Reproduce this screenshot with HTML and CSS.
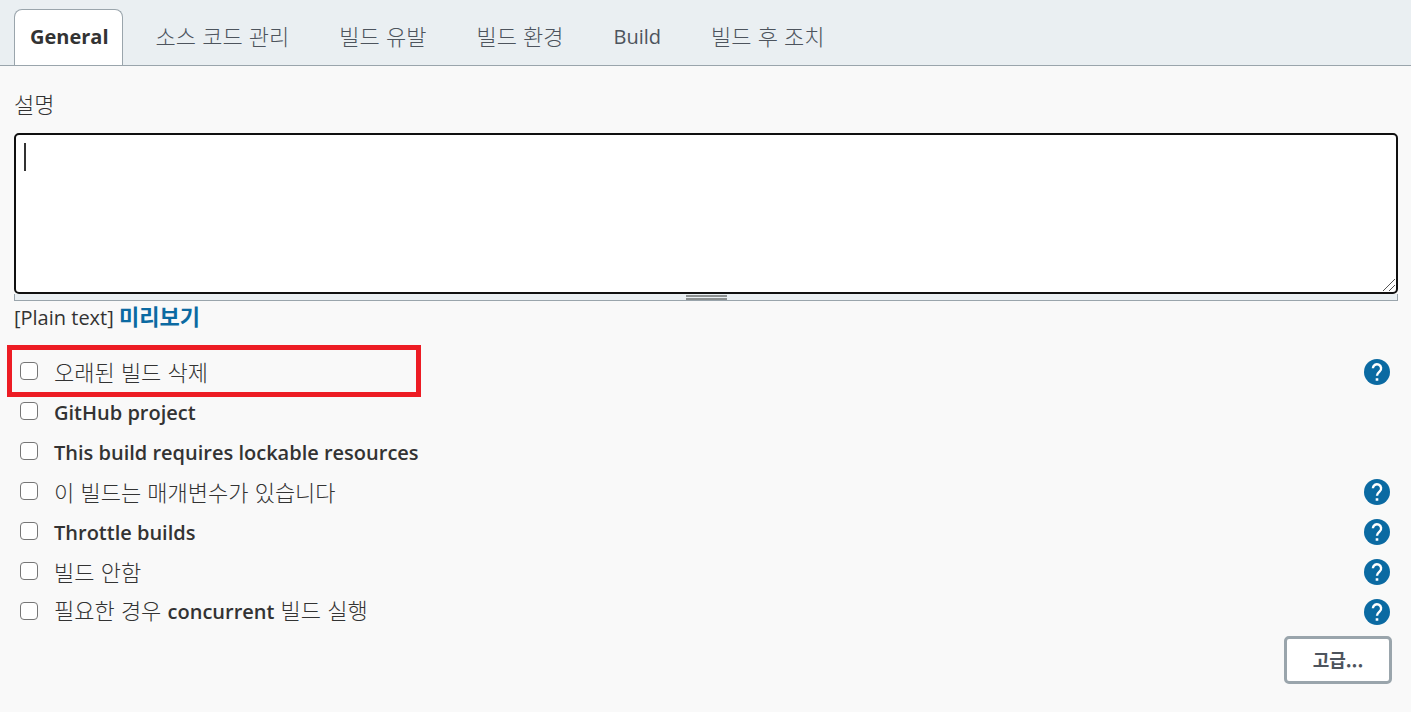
FILE: index.html
```html
<!DOCTYPE html>
<html lang="ko">
<head>
    <meta charset="UTF-8">
    <meta name="viewport" content="width=device-width, initial-scale=1.0">
    <title>General</title>
    <link rel="stylesheet" href="styles.css">
</head>
<body>
    <svg class="symbols" aria-hidden="true">
        <symbol id="help-icon" viewBox="0 0 24 24">
            <path d="M12 0a12 12 0 1 0 0 24a12 12 0 0 0 0-24z" fill="#0b6aa2"/>
            <path d="M8.2 8.6a3.8 3.8 0 1 1 6.3 2.9c-1.5 1.3-2.5 1.9-2.5 4" fill="none" stroke="#fff" stroke-width="2.2"/>
            <path d="M10.8 17.7h2.4v2.4h-2.4z" fill="#fff"/>
        </symbol>
    </svg>
    <nav class="tabs">
        <a class="tab active" href="#general">General</a>
        <a class="tab ko" href="#scm">소스 코드 관리</a>
        <a class="tab ko" href="#triggers">빌드 유발</a>
        <a class="tab ko" href="#environment">빌드 환경</a>
        <a class="tab" href="#build">Build</a>
        <a class="tab ko" href="#post-build">빌드 후 조치</a>
    </nav>
    <form class="config" id="general">
        <label class="description-label ko" for="description">설명</label>
        <div class="editor">
            <textarea id="description" name="description"></textarea>
            <span class="caret"></span>
            <svg class="grip" viewBox="0 0 14 14" aria-hidden="true">
                <path d="M1 13L13 1M7 13L13 7" fill="none" stroke="#555" stroke-width="1"/>
            </svg>
        </div>
        <div class="resize-bar"><span class="resize-handle"></span></div>
        <p class="markup">[Plain text] <a class="preview" href="#preview">미리보기</a></p>

        <div class="options">
            <div class="option highlight">
                <input type="checkbox" id="discard">
                <label class="ko" for="discard">오래된 빌드 삭제</label>
                <button class="help" type="button" aria-label="도움말"><svg><use href="#help-icon"/></svg></button>
            </div>
            <div class="option">
                <input type="checkbox" id="github">
                <label for="github">GitHub project</label>
            </div>
            <div class="option">
                <input type="checkbox" id="lockable">
                <label for="lockable">This build requires lockable resources</label>
            </div>
            <div class="option">
                <input type="checkbox" id="params">
                <label class="ko" for="params">이 빌드는 매개변수가 있습니다</label>
                <button class="help" type="button" aria-label="도움말"><svg><use href="#help-icon"/></svg></button>
            </div>
            <div class="option">
                <input type="checkbox" id="throttle">
                <label for="throttle">Throttle builds</label>
                <button class="help" type="button" aria-label="도움말"><svg><use href="#help-icon"/></svg></button>
            </div>
            <div class="option">
                <input type="checkbox" id="disable">
                <label class="ko" for="disable">빌드 안함</label>
                <button class="help" type="button" aria-label="도움말"><svg><use href="#help-icon"/></svg></button>
            </div>
            <div class="option">
                <input type="checkbox" id="concurrent">
                <label class="ko" for="concurrent">필요한 경우 <span class="latin">concurrent</span> 빌드 실행</label>
                <button class="help" type="button" aria-label="도움말"><svg><use href="#help-icon"/></svg></button>
            </div>
        </div>
        <div class="actions">
            <button class="advanced" type="button">고급...</button>
        </div>
    </form>
</body>
</html>
```
FILE: styles.css
```css
*,
*::before {
    box-sizing: border-box;
}
body {
    margin: 0;
    font-family: "Open Sans", "Noto Sans CJK KR", sans-serif;
    font-size: 20px;
    line-height: 28px;
    color: #333;
    background-color: #f9f9f9;
}
.symbols {
    display: none;
}
.ko {
    font-family: "Noto Sans CJK KR", sans-serif;
    font-size: 22px;
    font-weight: 300;
    line-height: 26px;
}
.tabs {
    display: flex;
    gap: 16px;
    height: 66px;
    padding: 9px 14px 0;
    background-color: #eaeff2;
    border-bottom: 1px solid #9aa5ac;
}
.tab {
    padding: 14px 17px 0;
    color: #4d545d;
    text-decoration: none;
    white-space: nowrap;
}
.tab.ko {
    padding-top: 13px;
}
.tab.active {
    padding: 13px 13px 0 15px;
    border: 1px solid #9aa5ac;
    border-bottom: 0;
    border-radius: 8px 8px 0 0;
    background-color: #fff;
    color: #333;
    font-weight: 700;
}
.config {
    padding: 24px 13px 28px 14px;
}
.description-label {
    display: block;
    margin-bottom: 17px;
}
.editor {
    position: relative;
}
.editor textarea {
    display: block;
    width: 100%;
    height: 161px;
    padding: 8px;
    border: 2px solid #101010;
    border-radius: 5px;
    outline: none;
    background-color: #fff;
    font: inherit;
    color: inherit;
    resize: none;
}
.caret {
    position: absolute;
    top: 10px;
    left: 10px;
    width: 2px;
    height: 28px;
    background-color: #333;
}
.grip {
    position: absolute;
    right: 2px;
    bottom: 2px;
    width: 14px;
    height: 14px;
}
.resize-bar {
    display: flex;
    justify-content: center;
    height: 7px;
    padding-top: 1px;
    border: 1px solid #9aa5ac;
    border-top: 0;
    background-color: #eaeff2;
}
.resize-handle {
    width: 41px;
    height: 5px;
    border-top: 2px solid #8b8f8f;
    border-bottom: 2px solid #8b8f8f;
}
.markup {
    margin: 3px 0 20px;
}
.preview {
    color: #0b6aa2;
    font-family: "Noto Sans CJK KR", sans-serif;
    font-size: 22px;
    font-weight: 700;
    line-height: 20px;
    text-decoration: none;
}
.option {
    position: relative;
    display: flex;
    align-items: center;
    height: 40px;
    padding: 0 8px 0 6px;
}
.option input {
    appearance: none;
    width: 18px;
    height: 18px;
    margin: 0 16px 2px 0;
    border: 1px solid #767676;
    border-radius: 4px;
    background-color: #fff;
}
.option input:checked {
    background-color: #0b6aa2;
}
.option label {
    padding-top: 2px;
    font-weight: 600;
}
.option .ko {
    padding: 0 0 3px;
    font-weight: 300;
}
.latin {
    font-family: "Open Sans", sans-serif;
    font-size: 20px;
    font-weight: 600;
}
.highlight::before {
    content: "";
    position: absolute;
    top: -7px;
    left: -7px;
    width: 414px;
    height: 52px;
    border: 5px solid #ed1c24;
    pointer-events: none;
}
.help {
    width: 26px;
    height: 26px;
    margin-left: auto;
    padding: 0;
    border: 0;
    background: none;
    cursor: pointer;
}
.help svg {
    display: block;
    width: 26px;
    height: 26px;
}
.actions {
    display: flex;
    justify-content: flex-end;
    padding: 4px 6px 0 0;
}
.advanced {
    width: 108px;
    height: 48px;
    padding: 0 0 3px;
    border: 3px solid #9aa5ac;
    border-radius: 5px;
    background-color: #fff;
    color: #4d545d;
    font-family: "Noto Sans CJK KR", sans-serif;
    font-size: 18px;
    font-weight: 700;
    cursor: pointer;
}
```
